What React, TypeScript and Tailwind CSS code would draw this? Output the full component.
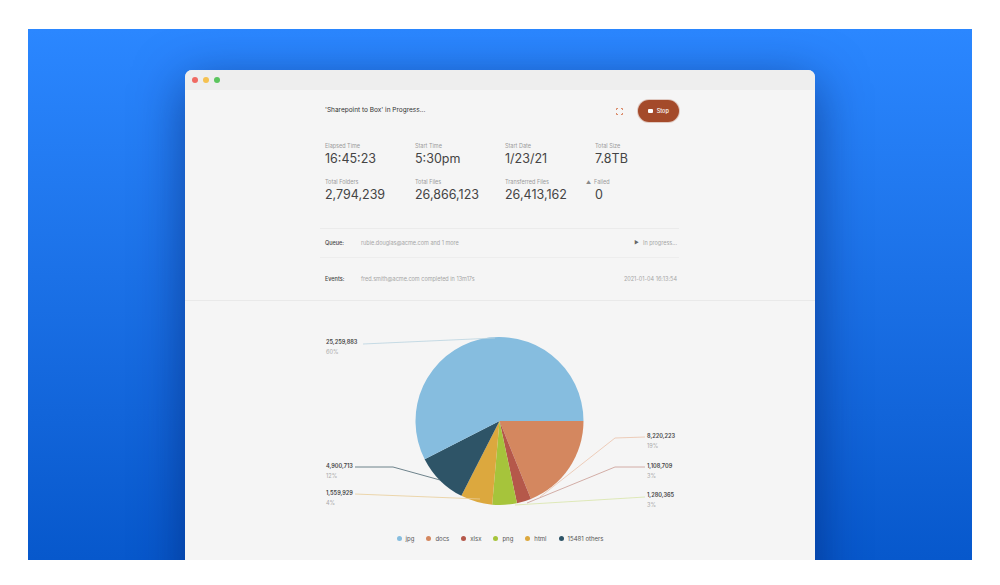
import React from "react";

const font = { fontFamily: "Inter, 'Open Sans', sans-serif" };

const stats = [
  [
    { label: "Elapsed Time", value: "16:45:23" },
    { label: "Start Time", value: "5:30pm" },
    { label: "Start Date", value: "1/23/21" },
    { label: "Total Size", value: "7.8TB" },
  ],
  [
    { label: "Total Folders", value: "2,794,239" },
    { label: "Total Files", value: "26,866,123" },
    { label: "Transferred Files", value: "26,413,162" },
    { label: "Failed", value: "0", warn: true },
  ],
];

const legend = [
  { name: "jpg", color: "bg-[#86bddf]" },
  { name: "docs", color: "bg-[#d4875f]" },
  { name: "xlsx", color: "bg-[#b5584a]" },
  { name: "png", color: "bg-[#a6c43b]" },
  { name: "html", color: "bg-[#dca83e]" },
  { name: "15481 others", color: "bg-[#2e5467]" },
];

// pie slices, angles in degrees clockwise from 3 o'clock
const cx = 314.5;
const cy = 120;
const r = 84;
const slices = [
  { from: 0, to: 68, color: "#d4875f" },
  { from: 68, to: 78, color: "#b5584a" },
  { from: 78, to: 95, color: "#a6c43b" },
  { from: 95, to: 117, color: "#dca83e" },
  { from: 117, to: 153, color: "#2e5467" },
  { from: 153, to: 360, color: "#86bddf" },
];

function pt(a: number) {
  const rad = (a * Math.PI) / 180;
  return [cx + r * Math.cos(rad), cy + r * Math.sin(rad)];
}

function slicePath(from: number, to: number) {
  const [x1, y1] = pt(from);
  const [x2, y2] = pt(to);
  const large = to - from > 180 ? 1 : 0;
  return `M${cx} ${cy} L${x1} ${y1} A${r} ${r} 0 ${large} 1 ${x2} ${y2} Z`;
}

const labels = [
  { x: 141, y: 41, value: "25,259,883", pct: "60%" },
  { x: 141, y: 165, value: "4,900,713", pct: "12%" },
  { x: 141, y: 192, value: "1,559,929", pct: "4%" },
  { x: 462, y: 135, value: "8,220,223", pct: "19%" },
  { x: 462, y: 165, value: "1,108,709", pct: "3%" },
  { x: 462, y: 194, value: "1,280,365", pct: "3%" },
];

function PieChart() {
  return (
    <svg width="630" height="220" viewBox="0 0 630 220" className="block">
      {slices.map((s) => (
        <path key={s.from} d={slicePath(s.from, s.to)} fill={s.color} />
      ))}
      <g fill="none" strokeWidth="0.8">
        <polyline points="178,43 310,37" stroke="#b9d3e0" />
        <polyline points="170,166 208,166 255,179" stroke="#4a6470" />
        <polyline points="170,193 295,198" stroke="#e8cd98" />
        <polyline points="460,136 430,137 355,196" stroke="#ebc1aa" />
        <polyline points="460,166 430,166 342,202" stroke="#c99a92" />
        <polyline points="460,196 330,204" stroke="#d8e4a8" />
      </g>
      {labels.map((l) => (
        <g key={l.value} style={font}>
          <text x={l.x} y={l.y} dominantBaseline="middle" fontSize="5.6" fontWeight="600" fill="#444">
            {l.value}
          </text>
          <text x={l.x} y={l.y + 10} dominantBaseline="middle" fontSize="5.6" fill="#aaa">
            {l.pct}
          </text>
        </g>
      ))}
    </svg>
  );
}

export default function App() {
  return (
    <div className="w-[1000px] h-[585px] bg-white pt-[29px] pl-[28px]" style={font}>
      <div className="w-[944px] h-[531px] overflow-hidden bg-linear-to-b from-[#2b87ff] to-[#0758cc]">
        <div className="ml-[157px] mt-[41px] w-[630px] h-[530px] rounded-t-[7px] bg-[#f5f5f5] shadow-[0_12px_50px_rgba(0,25,90,0.55)] overflow-hidden">
          {/* title bar */}
          <div className="h-[20px] bg-[#eeeeee] flex items-center gap-[5px] pl-[7px]">
            <span className="w-[6px] h-[6px] rounded-full bg-[#f06a62]" />
            <span className="w-[6px] h-[6px] rounded-full bg-[#f5c150]" />
            <span className="w-[6px] h-[6px] rounded-full bg-[#5cc55e]" />
          </div>

          <div className="pl-[140px] w-[494px]">
            {/* header */}
            <div className="mt-[10px] h-[22px] flex items-center justify-between">
              <span className="text-[6.5px] text-[#333]">'Sharepoint to Box' in Progress...</span>
              <div className="flex items-center gap-[15px]">
                <svg width="7" height="7" viewBox="0 0 7 7" fill="none" stroke="#d77a55" strokeWidth="0.9">
                  <path d="M0.5 2V0.5H2M5 0.5H6.5V2M6.5 5V6.5H5M2 6.5H0.5V5" />
                </svg>
                <button className="w-[41px] h-[22px] rounded-full bg-[#a44a2a] shadow-[0_0_0_1px_rgba(164,74,42,0.25)] flex items-center justify-center gap-[4px]">
                  <span className="w-[4.5px] h-[4.5px] rounded-[1px] bg-white" />
                  <span className="text-[5.5px] text-white font-medium">Stop</span>
                </button>
              </div>
            </div>

            {/* stats */}
            <div className="mt-[20px] flex flex-col gap-[11px]">
              {stats.map((row, i) => (
                <div key={i} className="grid grid-cols-[90px_90px_90px_90px]">
                  {row.map((s) => (
                    <div key={s.label} className="flex flex-col">
                      <span className="h-[8px] leading-[8px] text-[5.5px] text-[#9a9a9a] flex items-center gap-[3px]">
                        {s.warn && <span className="text-[5px] text-[#888] -ml-[9px]">▲</span>}
                        {s.label}
                      </span>
                      <span className="mt-[1px] h-[16px] leading-[16px] text-[12.5px] text-[#444]">{s.value}</span>
                    </div>
                  ))}
                </div>
              ))}
            </div>

            {/* queue / events */}
            <div className="mt-[25px] -ml-[5px] w-[359px] border-t border-[#ebebeb]">
              <div className="h-[29px] pl-[5px] flex items-center border-b border-[#ededed] text-[5.5px]">
                <span className="w-[36px] font-medium text-[#444]">Queue:</span>
                <span className="text-[#a5a5a5]">rubie.douglas@acme.com and 1 more</span>
                <span className="ml-auto text-[#a5a5a5] flex items-center gap-[4px] pr-[2px]">
                  <span className="text-[5px] text-[#666]">▶</span>In progress...
                </span>
              </div>
              <div className="h-[42px] pl-[5px] flex items-center text-[5.5px]">
                <span className="w-[36px] font-medium text-[#444]">Events:</span>
                <span className="text-[#a5a5a5]">fred.smith@acme.com completed in 13m17s</span>
                <span className="ml-auto text-[#a5a5a5] pr-[2px]">2021-01-04 16:13:54</span>
              </div>
            </div>
          </div>

          {/* chart */}
          <div className="border-t border-[#e9e9e9]">
            <PieChart />
            <div className="mt-[13px] flex justify-center items-center gap-[12px] text-[6px] text-[#555]">
              {legend.map((l) => (
                <span key={l.name} className="flex items-center gap-[4px]">
                  <span className={`w-[5px] h-[5px] rounded-full ${l.color}`} />
                  {l.name}
                </span>
              ))}
            </div>
          </div>
        </div>
      </div>
    </div>
  );
}
